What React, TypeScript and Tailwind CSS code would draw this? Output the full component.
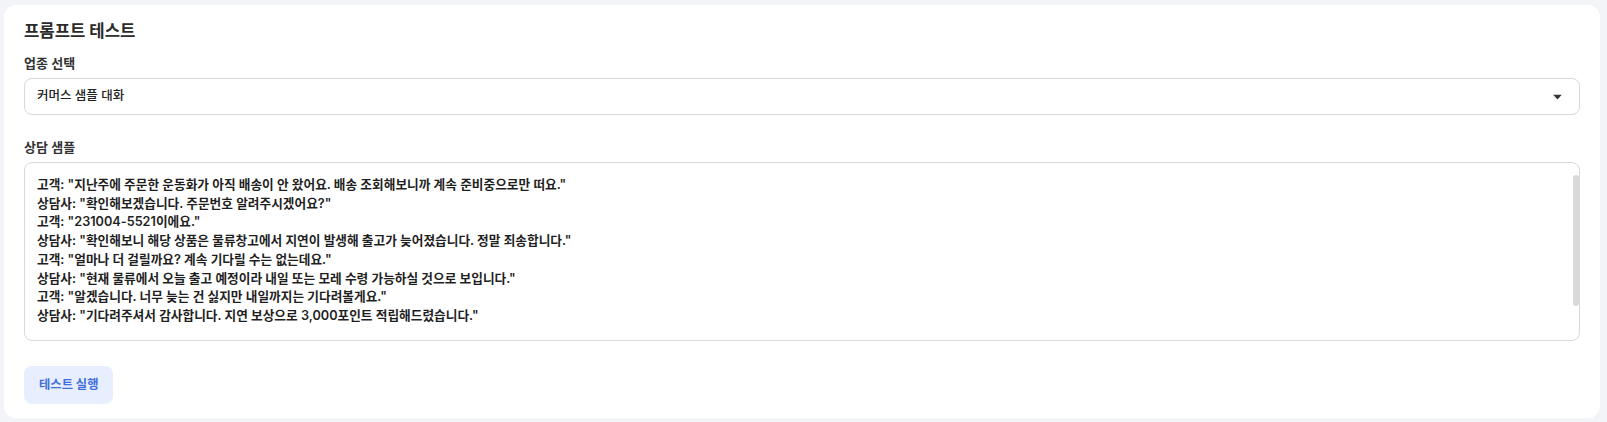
import { ChangeEvent, useState } from 'react';

const industries = ['커머스 샘플 대화', '금융 샘플 대화', '여행 샘플 대화'];

const sampleDialog = [
  '고객: "지난주에 주문한 운동화가 아직 배송이 안 왔어요. 배송 조회해보니까 계속 준비중으로만 떠요."',
  '상담사: "확인해보겠습니다. 주문번호 알려주시겠어요?"',
  '고객: "231004-5521이에요."',
  '상담사: "확인해보니 해당 상품은 물류창고에서 지연이 발생해 출고가 늦어졌습니다. 정말 죄송합니다."',
  '고객: "얼마나 더 걸릴까요? 계속 기다릴 수는 없는데요."',
  '상담사: "현재 물류에서 오늘 출고 예정이라 내일 또는 모레 수령 가능하실 것으로 보입니다."',
  '고객: "알겠습니다. 너무 늦는 건 싫지만 내일까지는 기다려볼게요."',
  '상담사: "기다려주셔서 감사합니다. 지연 보상으로 3,000포인트 적립해드렸습니다."',
];

export default function App() {
  const [industry, setIndustry] = useState(industries[0]);

  return (
    <div className="min-h-screen bg-[#f3f4f7] pb-[4px] pl-[4px] pr-[7px] pt-[5px] font-['Inter','Noto_Sans_CJK_KR',sans-serif] text-[#222]">
      <div className="rounded-xl bg-white px-5 pb-[14px] pt-[14px]">
        <h2 className="text-[16.7px] font-bold leading-6 text-[#2b2b2b]">프롬프트 테스트</h2>

        <label className="mt-[10px] block text-[13px] font-semibold leading-5 text-[#333]">업종 선택</label>
        <div className="relative mt-[5px]">
          <select
            value={industry}
            onChange={(e: ChangeEvent<HTMLSelectElement>) => setIndustry(e.target.value)}
            className="h-[37px] w-full appearance-none rounded-lg border border-[#d9d9d9] bg-white pl-3 pr-10 text-[12.5px] font-medium text-[#222] outline-none"
          >
            {industries.map((item) => (
              <option key={item}>{item}</option>
            ))}
          </select>
          <svg
            className="pointer-events-none absolute right-[18px] top-1/2 h-[5px] w-[9px] -translate-y-1/2 text-[#333]"
            viewBox="0 0 9 5"
            fill="currentColor"
          >
            <path d="M0 0h9L4.5 5z" />
          </svg>
        </div>

        <label className="mt-[22px] block text-[13px] font-semibold leading-5 text-[#333]">상담 샘플</label>
        <div className="relative mt-[5px] h-[179px] overflow-hidden rounded-lg border border-[#d9d9d9] bg-white">
          <div className="px-3 pt-[13px] text-[12.7px] font-semibold leading-[18.7px] text-[#1f1f1f]">
            {sampleDialog.map((line) => (
              <p key={line}>{line}</p>
            ))}
          </div>
          {/* scrollbar thumb */}
          <div className="absolute right-0 top-[12px] h-[131px] w-[6px] rounded-full bg-[#d9d9d9]" />
        </div>

        <button
          type="button"
          className="mt-[25px] h-[38px] rounded-lg bg-[#e7eefe] px-[15px] text-[12.3px] font-bold text-[#3f6fdc]"
        >
          테스트 실행
        </button>
      </div>
    </div>
  );
}
